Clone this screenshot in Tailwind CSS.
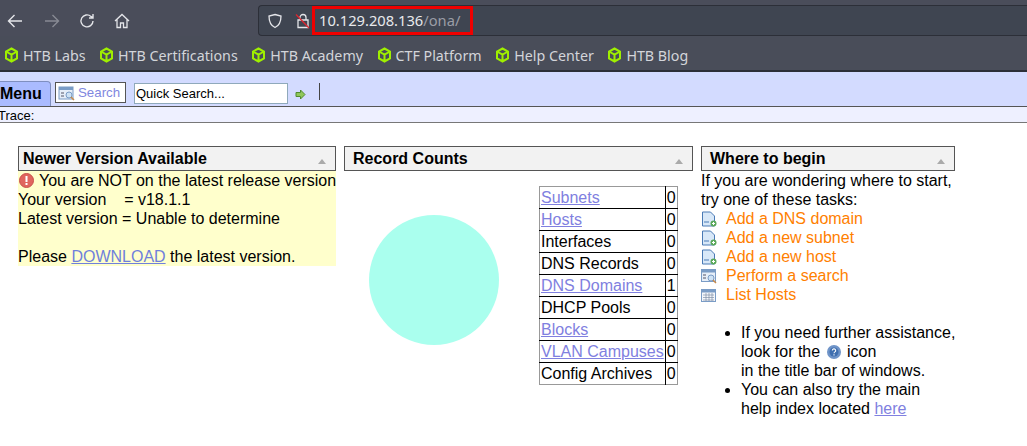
<!DOCTYPE html>
<html lang="en">
<head>
    <meta charset="UTF-8">
    <title>OpenNetAdmin</title>
    <script src="https://cdn.jsdelivr.net/npm/@tailwindcss/browser@4"></script>
</head>
<body class="bg-white h-[446px] w-[1027px] overflow-hidden font-['Liberation_Sans',sans-serif] text-[16px] leading-[19px] text-black">

    <!-- browser toolbar -->
    <div class="h-[36px] bg-[#4a4d5a] flex items-end">
        <div class="flex items-center h-[31px] w-[258px] pl-[7px] gap-[17px] text-[#e4e5e9]">
            <svg class="w-[16px] h-[16px]" viewBox="0 0 16 16" fill="none" stroke="currentColor" stroke-width="1.4"><path d="M15 8H1.500M7.500 2L1.500 8l6 6"/></svg>
            <svg class="w-[16px] h-[16px] ml-[4px] opacity-40" viewBox="0 0 16 16" fill="none" stroke="currentColor" stroke-width="1.4"><path d="M1 8h13.500M8.500 2l6 6-6 6"/></svg>
            <svg class="w-[16px] h-[16px] ml-[2px]" viewBox="0 0 16 16" fill="none" stroke="currentColor" stroke-width="1.4"><path d="M14 8a6 6 0 1 1-2-4.600L14 5M14 1v4h-4"/></svg>
            <svg class="w-[16px] h-[16px] ml-[2px]" viewBox="0 0 16 16" fill="none" stroke="currentColor" stroke-width="1.3"><path d="M1 8l7-6.500L15 8M3 6.500V14.500h3.500V10h3v4.500H13V6.500"/></svg>
        </div>
        <div class="flex-1 h-[31px] bg-[#3f4551] border border-[#2c2f38] border-r-0 rounded-l-[4px] flex items-center font-['Noto_Sans',sans-serif] text-[14.7px]">
            <svg class="ml-[8px] w-[16px] h-[16px] text-[#e4e5e9]" viewBox="0 0 16 16" fill="none" stroke="currentColor" stroke-width="1.3"><path d="M8 1.500l6 1.500c0 6-1.500 9.500-6 11.500C3.500 12.500 2 9 2 3z"/></svg>
            <svg class="ml-[12px] w-[16px] h-[16px] text-[#e4e5e9]" viewBox="0 0 16 16" fill="none"><path d="M5 7V4.500a3 3 0 0 1 6 0V7M3 7h10v7.500H3z" stroke="currentColor" stroke-width="1.300"/><path d="M1 1.500l13 13.500" stroke="#e0252f" stroke-width="1.300"/></svg>
            <div class="ml-[1px] h-[29px] w-[161px] border-[3px] border-[#f00000] pl-[4px] flex items-center text-[#e8e9ec]">10.129.208.136<span class="text-[#9a9da6]">/ona/</span></div>
        </div>
    </div>

    <!-- bookmarks -->
    <div class="h-[36px] bg-[#494d59] border-b-[2px] border-[#2c2f38] flex items-center pl-[4px] pt-[4px] gap-[13.5px] font-['Noto_Sans',sans-serif] text-[14.25px] text-[#d3d5da]">
        <span class="flex items-center gap-[4px]"><svg class="w-[15px] h-[16px]" viewBox="0 0 15 16" fill="none" stroke="#9fef00" stroke-width="2"><path d="M7.500 1.500l5.500 3v7l-5.500 3-5.500-3v-7zM2 4.500l5.500 3.200 5.500-3.200M7.500 7.700v6.800"/></svg>HTB Labs</span>
        <span class="flex items-center gap-[4px]"><svg class="w-[15px] h-[16px]" viewBox="0 0 15 16" fill="none" stroke="#9fef00" stroke-width="2"><path d="M7.500 1.500l5.500 3v7l-5.500 3-5.500-3v-7zM2 4.500l5.500 3.200 5.500-3.200M7.500 7.700v6.800"/></svg>HTB Certifications</span>
        <span class="flex items-center gap-[4px]"><svg class="w-[15px] h-[16px]" viewBox="0 0 15 16" fill="none" stroke="#9fef00" stroke-width="2"><path d="M7.500 1.500l5.500 3v7l-5.500 3-5.500-3v-7zM2 4.500l5.500 3.200 5.500-3.200M7.500 7.700v6.800"/></svg>HTB Academy</span>
        <span class="flex items-center gap-[4px]"><svg class="w-[15px] h-[16px]" viewBox="0 0 15 16" fill="none" stroke="#9fef00" stroke-width="2"><path d="M7.500 1.500l5.500 3v7l-5.500 3-5.500-3v-7zM2 4.500l5.500 3.200 5.500-3.200M7.500 7.700v6.800"/></svg>CTF Platform</span>
        <span class="flex items-center gap-[4px]"><svg class="w-[15px] h-[16px]" viewBox="0 0 15 16" fill="none" stroke="#9fef00" stroke-width="2"><path d="M7.500 1.500l5.500 3v7l-5.500 3-5.500-3v-7zM2 4.500l5.500 3.200 5.500-3.200M7.500 7.700v6.800"/></svg>Help Center</span>
        <span class="flex items-center gap-[4px]"><svg class="w-[15px] h-[16px]" viewBox="0 0 15 16" fill="none" stroke="#9fef00" stroke-width="2"><path d="M7.500 1.500l5.500 3v7l-5.500 3-5.500-3v-7zM2 4.500l5.500 3.200 5.500-3.200M7.500 7.700v6.800"/></svg>HTB Blog</span>
    </div>

    <!-- menu bar -->
    <div class="h-[35px] bg-[#d3dbff] border-b border-[#555] flex items-end">
        <div class="h-[25px] w-[51px] bg-[#aabbff] border border-b-0 border-[#7f8fc0] border-l-0 rounded-tr-[4px] font-bold leading-[24px]">Menu</div>
        <div class="ml-[4px] mb-[3px] h-[21px] w-[71px] bg-white border border-[#555] flex items-center pl-[2px] text-[13.3px] text-[#7f87e0]">
            <svg class="w-[17px] h-[16px] mr-[3px] shrink-0" viewBox="0 0 17 16"><rect x="1" y="2" width="14" height="12" fill="#e6eef8" stroke="#7a9cc6"/><rect x="1" y="2" width="14" height="3" fill="#7a9cc6"/><path d="M3 8h3M3 11h3" stroke="#556"/><circle cx="11" cy="10" r="3" fill="#cfe3f5" stroke="#7a9cc6"/><path d="M13 12l3 3" stroke="#c98a4a" stroke-width="1.500"/></svg>
            Search
        </div>
        <div class="ml-[8px] mb-[2px] h-[21px] w-[154px] bg-white border border-[#8fa9bb] pl-[1px] text-[13px] leading-[20px]">Quick Search...</div>
        <svg class="ml-[7px] mb-[6px] w-[11px] h-[11px]" viewBox="0 0 11 11"><path d="M1 3.500h4.500V1L10 5.500 5.500 10V7.500H1z" fill="#8fc75a" stroke="#4f8a2e"/></svg>
        <div class="ml-[13px] mb-[6px] w-px h-[17px] bg-[#444]"></div>
    </div>

    <!-- trace -->
    <div class="h-[16px] bg-[#eef0ff] border-b border-[#777] text-[13px] leading-[16px] pt-[1px] overflow-hidden"><span class="-ml-[2px] block">Trace:</span></div>

    <!-- workspace -->
    <div class="flex items-start gap-[8px] pl-[18px] pt-[23px]">

        <div class="w-[318px]">
            <div class="h-[25px] bg-[#f2f2f2] border border-[#555] flex items-center justify-between pl-[4px] pr-[9px] font-bold leading-[22px]">Newer Version Available
                <span class="mt-[5px] w-0 h-0 border-x-[4px] border-x-transparent border-b-[5px] border-b-[#aaa]"></span></div>
            <div class="bg-[#ffffcc] h-[95px]">
                <div class="flex items-center h-[19px] whitespace-nowrap"><svg class="w-[15px] h-[15px] ml-[1px] mr-[5px] shrink-0" viewBox="0 0 15 15"><circle cx="7.500" cy="7.500" r="7" fill="#e0655e" stroke="#c9504a"/><rect x="6.500" y="3" width="2" height="6" fill="#fff"/><rect x="6.500" y="10" width="2" height="2" fill="#fff"/></svg>You are NOT on the latest release version</div>
                <div class="whitespace-pre">Your version    = v18.1.1</div>
                <div>Latest version = Unable to determine</div>
                <div class="h-[19px]"></div>
                <div>Please <a class="text-[#6f7fdc] underline">DOWNLOAD</a> the latest version.</div>
            </div>
        </div>

        <div class="w-[349px]">
            <div class="h-[25px] bg-[#f2f2f2] border border-[#555] flex items-center justify-between pl-[8px] pr-[9px] font-bold leading-[22px]">Record Counts
                <span class="mt-[5px] w-0 h-0 border-x-[4px] border-x-transparent border-b-[5px] border-b-[#aaa]"></span></div>
            <div class="flex items-start pl-[25px] pt-[15px]">
                <div class="w-[130px] h-[130px] mt-[29px] rounded-full bg-[#aaffee] shrink-0"></div>
                <table class="ml-[40px] border-collapse border border-[#999] leading-[19px]">
                    <tbody>
                        <tr class="h-[22px] border-b border-black"><td class="pl-[1px] pr-[1px] border-r border-black"><a class="text-[#8080e0] underline">Subnets</a></td><td class="px-[1px]">0</td></tr>
                        <tr class="h-[22px] border-b border-black"><td class="pl-[1px] pr-[1px] border-r border-black"><a class="text-[#8080e0] underline">Hosts</a></td><td class="px-[1px]">0</td></tr>
                        <tr class="h-[22px] border-b border-black"><td class="pl-[1px] pr-[1px] border-r border-black">Interfaces</td><td class="px-[1px]">0</td></tr>
                        <tr class="h-[22px] border-b border-black"><td class="pl-[1px] pr-[1px] border-r border-black">DNS Records</td><td class="px-[1px]">0</td></tr>
                        <tr class="h-[22px] border-b border-black"><td class="pl-[1px] pr-[1px] border-r border-black"><a class="text-[#8080e0] underline">DNS Domains</a></td><td class="px-[1px]">1</td></tr>
                        <tr class="h-[22px] border-b border-black"><td class="pl-[1px] pr-[1px] border-r border-black">DHCP Pools</td><td class="px-[1px]">0</td></tr>
                        <tr class="h-[22px] border-b border-black"><td class="pl-[1px] pr-[1px] border-r border-black"><a class="text-[#8080e0] underline">Blocks</a></td><td class="px-[1px]">0</td></tr>
                        <tr class="h-[22px] border-b border-black"><td class="pl-[1px] pr-[1px] border-r border-black"><a class="text-[#8080e0] underline">VLAN Campuses</a></td><td class="px-[1px]">0</td></tr>
                        <tr class="h-[22px]"><td class="pl-[1px] pr-[1px] border-r border-black">Config Archives</td><td class="px-[1px]">0</td></tr>
                    </tbody>
                </table>
            </div>
        </div>

        <div class="w-[254px]">
            <div class="h-[25px] bg-[#f2f2f2] border border-[#555] flex items-center justify-between pl-[8px] pr-[9px] font-bold leading-[22px]">Where to begin
                <span class="mt-[5px] w-0 h-0 border-x-[4px] border-x-transparent border-b-[5px] border-b-[#aaa]"></span></div>
            <div class="whitespace-nowrap">If you are wondering where to start,</div>
            <div>try one of these tasks:</div>
            <div class="text-[#ff8000]">
                <div class="flex items-center h-[19px] gap-[9px]"><svg class="w-[16px] h-[16px] shrink-0" viewBox="0 0 16 16"><path d="M1.500 1h8l4 4v10h-12z" fill="#d8e8f8" stroke="#4a7ab5"/><path d="M3 11h5" stroke="#4a7ab5"/><circle cx="12.500" cy="12.500" r="3" fill="#5aa85a"/><path d="M11 12.500h3M12.500 11v3" stroke="#fff"/></svg>Add a DNS domain</div>
                <div class="flex items-center h-[19px] gap-[9px]"><svg class="w-[16px] h-[16px] shrink-0" viewBox="0 0 16 16"><path d="M1.500 1h8l4 4v10h-12z" fill="#d8e8f8" stroke="#4a7ab5"/><path d="M3 11h5" stroke="#4a7ab5"/><circle cx="12.500" cy="12.500" r="3" fill="#5aa85a"/><path d="M11 12.500h3M12.500 11v3" stroke="#fff"/></svg>Add a new subnet</div>
                <div class="flex items-center h-[19px] gap-[9px]"><svg class="w-[16px] h-[16px] shrink-0" viewBox="0 0 16 16"><path d="M1.500 1h8l4 4v10h-12z" fill="#d8e8f8" stroke="#4a7ab5"/><path d="M3 11h5" stroke="#4a7ab5"/><circle cx="12.500" cy="12.500" r="3" fill="#5aa85a"/><path d="M11 12.500h3M12.500 11v3" stroke="#fff"/></svg>Add a new host</div>
                <div class="flex items-center h-[19px] gap-[9px]"><svg class="w-[16px] h-[16px] shrink-0" viewBox="0 0 16 16"><rect x="0.500" y="1.500" width="14" height="12" fill="#e6eef8" stroke="#7a9cc6"/><rect x="0.500" y="1.500" width="14" height="3" fill="#7a9cc6"/><path d="M2 7h3M2 10h3" stroke="#556"/><circle cx="10" cy="10" r="3" fill="#cfe3f5" stroke="#7a9cc6"/><path d="M12 12l3 3" stroke="#c98a4a" stroke-width="1.500"/></svg>Perform a search</div>
                <div class="flex items-center h-[19px] gap-[9px]"><svg class="w-[16px] h-[16px] shrink-0" viewBox="0 0 16 16"><rect x="0.500" y="2.500" width="14" height="12" fill="#f4f6fa" stroke="#7a9cc6"/><rect x="0.500" y="2.500" width="14" height="3" fill="#7a9cc6"/><path d="M2 8h11M2 10.500h11M2 13h11M5 6v8M8 6v8M11 6v8" stroke="#8090a8" stroke-width="0.700"/></svg>List Hosts</div>
            </div>
            <ul class="list-disc pl-[40px] pt-[19px] whitespace-nowrap">
                <li>If you need further assistance,<br>look for the <svg class="inline w-[16px] h-[16px] align-[-3px] mx-[1px]" viewBox="0 0 16 16"><circle cx="8" cy="8" r="7" fill="#6f94c8"/><circle cx="8" cy="8" r="4.500" fill="#3f6fb0"/><path d="M6.300 6.500a1.700 1.700 0 1 1 2.400 1.600c-.5.300-.7.600-.7 1.100M8 10.300v1.200" fill="none" stroke="#fff" stroke-width="1.100"/></svg> icon<br>in the title bar of windows.</li>
                <li>You can also try the main<br>help index located <a class="text-[#8080e0] underline">here</a></li>
            </ul>
        </div>
    </div>
</body>
</html>
